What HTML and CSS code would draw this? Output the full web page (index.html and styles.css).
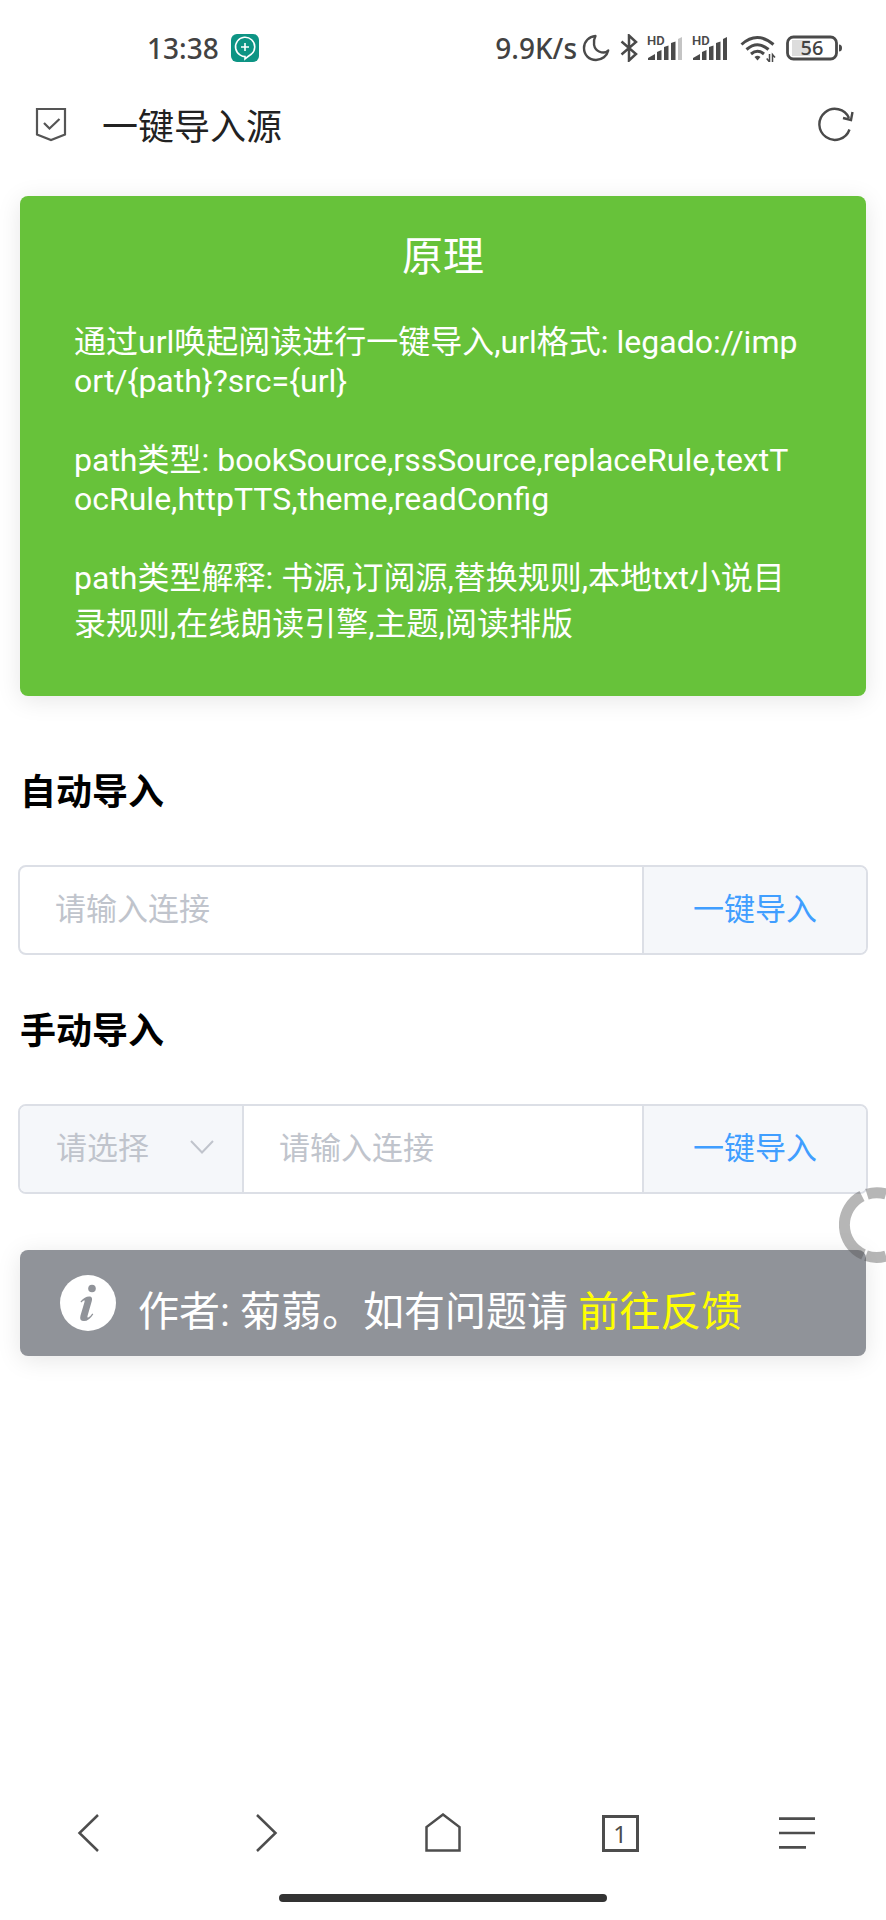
FILE: index.html
```html
<!DOCTYPE html>
<html lang="zh-CN">
<head>
<meta charset="utf-8">
<meta name="viewport" content="width=device-width, initial-scale=1">
<title>一键导入源</title>
<link rel="stylesheet" href="styles.css">
</head>
<body>
<div class="status">
  <div class="status-group">
    <span class="clock">13:38</span>
    <svg class="app-badge" width="28" height="28" viewBox="0 0 28 28"><rect width="28" height="28" rx="6" fill="#0d9484"/><path d="M14 25v-2.400a9.600 9.600 0 0 1-4.700-1.500A9.600 9.600 0 1 1 20.500 20Q17.500 22 14 25ZM14 9v8M10 13h8" fill="none" stroke="#fff" stroke-width="1.600"/></svg>
  </div>
  <div class="status-group status-right">
    <span class="speed">9.9K/s</span>
    <svg width="28" height="28" viewBox="0 0 28 28"><path d="M13.500 2C7 2.500 2 7.500 2 14c0 7 5 12 12 12 6 0 11-4 12.200-9.500C24 19 20.500 19 17 17.500 11.500 15 10.500 7.500 13.500 2Z" fill="none" stroke="#4a4a4a" stroke-width="2.400" stroke-linejoin="round"/></svg>
    <svg class="bluetooth" width="18" height="28" viewBox="0 0 18 28"><path d="M1.500 7.500l14.500 12.500-7 6.500v-25L16 8 1.500 20.500" fill="none" stroke="#4a4a4a" stroke-width="2.500"/></svg>
    <svg class="signal" width="36" height="28" viewBox="0 0 36 28"><text x="0" y="11" class="signal-text">HD</text><path d="M1 26v-2l7-4v6ZM10 26v-8l4.500-2v10ZM17 26V13l4.500-1.500V26ZM24 26V9l4.500-1.500V26Z" fill="#4a4a4a"/><path d="M31 26V5l4-2v23Z" fill="#c4c4c4"/></svg>
    <svg class="signal" width="36" height="28" viewBox="0 0 36 28"><text x="0" y="11" class="signal-text">HD</text><path d="M1 26v-2l7-4v6ZM10 26v-8l4.500-2v10ZM17 26V13l4.500-1.500V26ZM24 26V9l4.500-1.500V26ZM31 26V5l4-2v23Z" fill="#4a4a4a"/></svg>
    <svg class="wifi" width="36" height="28" viewBox="0 0 36 28"><path d="M1.500 10.500q15.500-14 32 0M6.500 15.500q11-9.500 22 0M11 20q6.500-5.500 13 0" fill="none" stroke="#4a4a4a" stroke-width="3"/><path d="M14.500 23q3-2.500 6 0l-3 3.500Z" fill="#4a4a4a"/><path d="M29.500 20v8l-2.800-3.500M32.500 28v-7.500l2.500 3" fill="none" stroke="#4a4a4a" stroke-width="1.500"/></svg>
    <svg class="battery" width="57" height="26" viewBox="0 0 57 26"><rect x="6" y="5" width="18" height="16" fill="#ddd"/><rect x="1.500" y="2" width="49" height="22" rx="6" fill="none" stroke="#4a4a4a" stroke-width="2.800"/><path d="M53 9.500q3 0 3 3.500t-3 3.500Z" fill="#4a4a4a"/><text x="26" y="20" text-anchor="middle" class="battery-text">56</text></svg>
  </div>
</div>

<header class="titlebar">
  <svg width="32" height="36" viewBox="0 0 32 36"><path d="M2 3h28v25.500L16 34 2 28.500ZM9 17l5.500 5.500L24.500 13" fill="none" stroke="#555" stroke-width="2.200"/></svg>
  <h1 class="page-title">一键导入源</h1>
  <button class="icon-button" aria-label="刷新"><svg width="36" height="36" viewBox="0 0 36 36"><path d="M31.500 23.500A15.500 15.500 0 1 1 31 12M34.500 6l-1.500 8-8-2" fill="none" stroke="#4a4a4a" stroke-width="2.400"/></svg></button>
</header>

<main class="content">
  <section class="card">
    <h2 class="card-title">原理</h2>
    <p>通过url唤起阅读进行一键导入,url格式: legado://import/{path}?src={url}</p>
    <p>path类型: bookSource,rssSource,replaceRule,textTocRule,httpTTS,theme,readConfig</p>
    <p>path类型解释: 书源,订阅源,替换规则,本地txt小说目录规则,在线朗读引擎,主题,阅读排版</p>
  </section>

  <h3 class="section-title" id="auto">自动导入</h3>
  <form class="group">
    <input class="field" type="text" placeholder="请输入连接" aria-labelledby="auto">
    <button class="submit" type="button">一键导入</button>
  </form>

  <h3 class="section-title" id="manual">手动导入</h3>
  <form class="group">
    <div class="picker">
      <select class="select" aria-label="类型"><option>请选择</option></select>
      <svg class="chevron" width="24" height="14" viewBox="0 0 24 14"><path d="M1 1l11 11.500L23 1" fill="none" stroke="#c0c4cc" stroke-width="2"/></svg>
    </div>
    <input class="field" type="text" placeholder="请输入连接" aria-labelledby="manual">
    <button class="submit" type="button">一键导入</button>
  </form>

  <section class="notice">
    <svg class="info" width="56" height="56" viewBox="0 0 56 56"><circle cx="28" cy="28" r="28" fill="#fff"/><circle cx="32" cy="13.500" r="3.800" fill="#909399"/><path d="M20.500 26.500Q25 21.500 29 21.500c3 0 3.500 2 2.800 4.500L27.500 41q-.5 2 .8 1.500 2-.8 4-4l1 .7Q29 46 24 46q-5 0-3.500-5.500l4-13.500q.6-2-.7-1.600-1 .4-2.600 2Z" fill="#909399"/></svg>
    <p>作者: 菊蒻。如有问题请 <a class="feedback" href="#">前往反馈</a></p>
  </section>
</main>

<svg class="assist" width="47" height="76" viewBox="0 0 47 76"><path d="M23 9A32.500 32.500 0 0 0 24.500 67.500M28 7.200A32.500 32.500 0 0 1 47 7M27 68.600A32.500 32.500 0 0 0 47 69" fill="none" stroke="#555" stroke-opacity=".43" stroke-width="11"/></svg>

<footer class="bottom">
  <nav class="nav">
    <button class="icon-button" aria-label="后退"><svg width="40" height="40" viewBox="0 0 40 40"><path d="M29 2L10.500 20 29 38" fill="none" stroke="#4d4d4d" stroke-width="2.500"/></svg></button>
    <button class="icon-button" aria-label="前进"><svg width="40" height="40" viewBox="0 0 40 40"><path d="M11 2l18.500 18L11 38" fill="none" stroke="#4d4d4d" stroke-width="2.500"/></svg></button>
    <button class="icon-button" aria-label="主页"><svg width="40" height="40" viewBox="0 0 40 40"><path d="M20 1.500L36.500 14v23.500h-33V14Z" fill="none" stroke="#4d4d4d" stroke-width="2.500"/></svg></button>
    <button class="icon-button" aria-label="标签页"><span class="tabs">1</span></button>
    <button class="icon-button" aria-label="菜单"><svg width="40" height="40" viewBox="0 0 40 40"><path d="M2 5.700h36M2 20h36M2 34.300h27" fill="none" stroke="#4d4d4d" stroke-width="2.700"/></svg></button>
  </nav>
  <div class="home-indicator"></div>
</footer>
</body>
</html>
```
FILE: styles.css
```css
* {
  box-sizing: border-box;
}

body {
  display: flex;
  flex-direction: column;
  min-height: 100vh;
  margin: 0;
  overflow-x: hidden;
  background: #fff;
  color: #000;
  font-family: Roboto, "Noto Sans CJK SC", sans-serif;
}

h1, h2, h3, p {
  margin: 0;
}

button, input, select {
  margin: 0;
  border: 0;
  border-radius: 0;
  background: none;
  font: inherit;
}

svg {
  display: block;
  flex: none;
}

.status {
  display: flex;
  justify-content: space-between;
  align-items: center;
  height: 96px;
  padding: 0 43px 0 147px;
  color: #424242;
  font-family: "Noto Sans", sans-serif;
  font-size: 28px;
  font-weight: 500;
}

.status-group {
  display: flex;
  align-items: center;
}

.app-badge {
  margin-left: 12px;
}

.speed {
  margin-right: 5px;
}

.bluetooth {
  margin-left: 10px;
}

.signal {
  margin-left: 9px;
}

.signal-text {
  fill: #4a4a4a;
  font-family: Roboto, sans-serif;
  font-size: 13px;
  font-weight: 600;
}

.wifi {
  margin-left: 12px;
}

.battery {
  margin-left: 10px;
}

.battery-text {
  fill: #424242;
  font-size: 20px;
  font-weight: 500;
}

.titlebar {
  display: flex;
  align-items: center;
  height: 56px;
  padding: 0 32px 0 35px;
}

.page-title {
  flex: 1;
  margin-left: 35px;
  color: #222;
  font-size: 36px;
  font-weight: 400;
}

.icon-button {
  display: flex;
  justify-content: center;
  align-items: center;
  padding: 0;
}

.content {
  padding: 44px 18px 0;
}

.card {
  margin: 0 2px;
  padding: 36px 64px 52px 54px;
  border-radius: 8px;
  background: #67c23a;
  box-shadow: 0 4px 24px rgba(0, 0, 0, 0.1);
  color: #fff;
  font-size: 32px;
  word-break: break-all;
}

.card p {
  margin-top: 34px;
}

.card-title {
  margin-right: -10px;
  font-size: 41px;
  font-weight: 400;
  line-height: 50px;
  text-align: center;
}

.section-title {
  margin: 47px 2px 42px;
  font-size: 36px;
  font-weight: 700;
  line-height: 60px;
}

.card + .section-title {
  margin-top: 67px;
}

.group {
  display: flex;
  height: 90px;
  overflow: hidden;
  border: 2px solid #dcdfe6;
  border-radius: 8px;
  font-size: 31px;
}

.field {
  flex: 1;
  min-width: 0;
  padding: 0 35px 2px;
  color: #606266;
}

.field::placeholder {
  color: #c0c4cc;
}

.submit {
  width: 224px;
  padding: 0 0 8px;
  border-left: 2px solid #dcdfe6;
  background: #f5f7fa;
  color: #409eff;
}

.picker {
  position: relative;
  width: 224px;
  border-right: 2px solid #dcdfe6;
  background: #f5f7fa;
}

.select {
  width: 100%;
  height: 100%;
  padding: 0 36px 2px;
  color: #c0c4cc;
  appearance: none;
}

.chevron {
  position: absolute;
  top: 34px;
  right: 28px;
  pointer-events: none;
}

.notice {
  display: flex;
  align-items: center;
  min-height: 106px;
  margin: 56px 2px 0;
  padding: 0 40px;
  border-radius: 8px;
  background: #909399;
  box-shadow: 0 4px 24px rgba(0, 0, 0, 0.1);
  color: #fff;
  font-size: 41px;
}

.notice p {
  margin-left: 22px;
  padding-top: 10px;
}

.feedback {
  color: #ff0;
  text-decoration: none;
}

.assist {
  position: absolute;
  top: 1187px;
  right: 0;
}

.bottom {
  margin-top: auto;
  padding-bottom: 18px;
}

.nav {
  display: grid;
  grid-template-columns: repeat(5, 1fr);
  height: 122px;
}

.tabs {
  display: flex;
  justify-content: center;
  align-items: center;
  width: 37px;
  height: 37px;
  border: 3px solid #4d4d4d;
  color: #4d4d4d;
  font-family: "Noto Sans", sans-serif;
  font-size: 24px;
}

.home-indicator {
  width: 37%;
  height: 8px;
  margin: 0 auto;
  border-radius: 4px;
  background: #333;
}
```
